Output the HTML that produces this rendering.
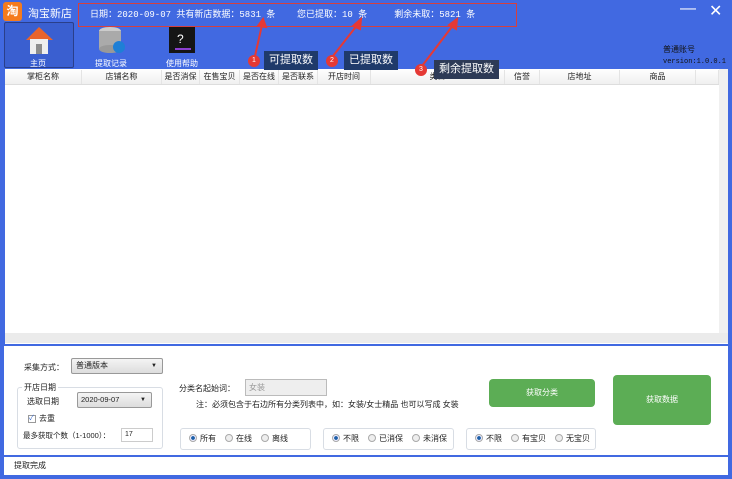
<!DOCTYPE html>
<html><head><meta charset="utf-8"><style>
*{margin:0;padding:0;box-sizing:border-box}
body{width:732px;height:479px;background:#4169e1;position:relative;overflow:hidden;font-family:"Liberation Sans","Noto Sans CJK SC",sans-serif;font-size:9px;color:#222}
.a{position:absolute}
.w{color:#fff}
.hd{position:absolute;top:70px;height:14px;font-size:8px;text-align:center;line-height:14px;border-right:1px solid #e4e4e4;white-space:nowrap;overflow:hidden}
.tip{position:absolute;background:#1f3a6a;color:#fff;font-size:11px;padding:0 5px;height:19px;line-height:19px}
.num{position:absolute;width:12px;height:12px;border-radius:6px;background:#e53935;color:#fff;font-size:7px;text-align:center;line-height:12px}
.rb{display:inline-block;width:8px;height:8px;border-radius:4px;border:1px solid #aaa;background:#eee;vertical-align:-1px;margin-right:3px}
.rb.on{background:radial-gradient(#1d5fa8 40%,#eef 50%)}
.grp{position:absolute;border:1px solid #d8dde4;border-radius:3px;height:22px;top:428px;line-height:20px;font-size:8px;padding-left:8px;white-space:nowrap;overflow:hidden}
.grp span{margin-right:9px}
.btn{position:absolute;background:#5cad55;border-radius:4px;color:#fff;text-align:center;font-size:8px}
</style></head><body>
<div class="a" style="left:3px;top:2px;width:19px;height:19px;background:#f57b1d;border-radius:3px;color:#fff;font-size:12px;line-height:19px;text-align:center;font-weight:bold">淘</div>
<div class="a w" style="left:28px;top:5px;font-size:11px">淘宝新店</div>
<div class="a" style="left:78px;top:3px;width:439px;height:24px;border:1px solid #d5403f"></div>
<div class="a w" style="left:90px;top:7px;font-size:9px;font-family:'Liberation Mono','Noto Sans CJK SC',monospace;white-space:pre">日期：2020-09-07 共有新店数据：5831 条    您已提取：10 条     剩余未取：5821 条</div>
<div class="a w" style="left:680px;top:0px;font-size:16px">—</div>
<div class="a w" style="left:709px;top:1px;font-size:16px">✕</div>
<div class="a" style="left:4px;top:22px;width:70px;height:46px;border:1px solid #2a3f8a;background:#3a5fd0;border-radius:2px"></div>
<svg class="a" style="left:22px;top:24px" width="34" height="32"><path d="M4 16 L17 3 L31 16 Z" fill="#e8642c"/><rect x="8" y="15" width="18" height="15" fill="#eee"/><rect x="14" y="20" width="6" height="10" fill="#8c8c8c"/></svg>
<div class="a w" style="left:30px;top:58px;font-size:8px">主页</div>
<svg class="a" style="left:97px;top:25px" width="30" height="32"><ellipse cx="13" cy="6" rx="11" ry="4" fill="#ccc"/><rect x="2" y="6" width="22" height="18" fill="#aaa"/><ellipse cx="13" cy="24" rx="11" ry="4" fill="#999"/><circle cx="22" cy="22" r="6" fill="#1e7fd6"/></svg>
<div class="a w" style="left:95px;top:58px;font-size:8px">提取记录</div>
<svg class="a" style="left:167px;top:25px" width="32" height="30"><rect x="2" y="2" width="26" height="26" fill="#151515"/><text x="10" y="18" fill="#fff" font-size="12" font-family="Liberation Sans">?</text><rect x="8" y="23" width="16" height="2" fill="#8c3fd0"/></svg>
<div class="a w" style="left:166px;top:58px;font-size:8px">使用帮助</div>
<div class="a" style="left:663px;top:44px;font-size:8px;color:#111">普通账号</div>
<div class="a" style="left:663px;top:58px;font-size:7px;color:#111;font-family:'Liberation Mono',monospace">version:1.0.0.1</div>
<div class="a" style="left:5px;top:69px;width:723px;height:275px;background:#fff"></div>
<div class="a" style="left:5px;top:69px;width:714px;height:16px;background:linear-gradient(#fff,#f0f0f0);border-bottom:1px solid #ddd"></div>
<div class="hd" style="left:5px;width:77px">掌柜名称</div>
<div class="hd" style="left:82px;width:80px">店铺名称</div>
<div class="hd" style="left:162px;width:38px">是否消保</div>
<div class="hd" style="left:200px;width:40px">在售宝贝</div>
<div class="hd" style="left:240px;width:39px">是否在线</div>
<div class="hd" style="left:279px;width:39px">是否联系</div>
<div class="hd" style="left:318px;width:53px">开店时间</div>
<div class="hd" style="left:371px;width:134px">类目</div>
<div class="hd" style="left:505px;width:35px">信誉</div>
<div class="hd" style="left:540px;width:80px">店地址</div>
<div class="hd" style="left:620px;width:76px">商品</div>
<div class="hd" style="left:696px;width:23px"></div>
<div class="a" style="left:719px;top:69px;width:9px;height:264px;background:#f0f0f0"></div>
<div class="a" style="left:5px;top:333px;width:723px;height:10px;background:#ebebeb"></div>
<svg class="a" style="left:0;top:0" width="732" height="90"><g stroke="#e53935" stroke-width="2" fill="#e53935"><line x1="255" y1="56" x2="262" y2="25"/><path d="M258 26 L263 19 L266 27Z"/><line x1="333" y1="56" x2="358" y2="24"/><path d="M353 26 L361 19 L360 29Z"/><line x1="422" y1="66" x2="454" y2="24"/><path d="M449 25 L457 19 L456 29Z"/></g></svg>
<div class="num" style="left:248px;top:55px">1</div>
<div class="tip" style="left:264px;top:51px">可提取数</div>
<div class="num" style="left:326px;top:55px">2</div>
<div class="tip" style="left:344px;top:51px">已提取数</div>
<div class="num" style="left:415px;top:64px">3</div>
<div class="tip" style="left:434px;top:60px;background:#2d3a56">剩余提取数</div>
<div class="a" style="left:4px;top:346px;width:724px;height:109px;background:#fff"></div>
<div class="a" style="left:24px;top:362px;font-size:8px">采集方式：</div>
<div class="a" style="left:71px;top:358px;width:92px;height:16px;border:1px solid #999;border-radius:2px;background:linear-gradient(#f4f4f4,#ddd);font-size:8px;line-height:14px;padding-left:4px">普通版本<span style="position:absolute;right:5px;font-size:6px">▼</span></div>
<div class="a" style="left:17px;top:387px;width:146px;height:62px;border:1px solid #d8dde4;border-radius:3px"></div>
<div class="a" style="left:22px;top:382px;font-size:8px;background:#fff;padding:0 2px">开店日期</div>
<div class="a" style="left:27px;top:396px;font-size:8px">选取日期</div>
<div class="a" style="left:77px;top:392px;width:75px;height:16px;border:1px solid #999;border-radius:2px;background:linear-gradient(#f4f4f4,#ddd);font-size:7.5px;line-height:14px;padding-left:3px">2020-09-07<span style="position:absolute;right:5px;font-size:6px">▼</span></div>
<div class="a" style="left:28px;top:415px;width:8px;height:8px;border:1px solid #999;font-size:7px;line-height:6px;color:#36c">✓</div>
<div class="a" style="left:39px;top:413px;font-size:8px">去重</div>
<div class="a" style="left:23px;top:430px;font-size:7.5px">最多获取个数（1-1000）：</div>
<div class="a" style="left:121px;top:428px;width:32px;height:14px;border:1px solid #ccc;font-size:7px;line-height:12px;padding-left:3px">17</div>
<div class="a" style="left:179px;top:383px;font-size:8px">分类名起始词：</div>
<div class="a" style="left:245px;top:379px;width:82px;height:17px;border:1px solid #bbb;background:#eee;font-size:8px;color:#999;line-height:15px;padding-left:3px">女装</div>
<div class="a" style="left:196px;top:399px;font-size:8px">注：必须包含于右边所有分类列表中，如：女装/女士精品 也可以写成 女装</div>
<div class="grp" style="left:180px;width:131px"><span><i class="rb on"></i>所有</span><span><i class="rb"></i>在线</span><span><i class="rb"></i>离线</span></div>
<div class="grp" style="left:323px;width:131px"><span><i class="rb on"></i>不限</span><span><i class="rb"></i>已消保</span><span><i class="rb"></i>未消保</span></div>
<div class="grp" style="left:466px;width:130px"><span><i class="rb on"></i>不限</span><span><i class="rb"></i>有宝贝</span><span><i class="rb"></i>无宝贝</span></div>
<div class="btn" style="left:489px;top:379px;width:106px;height:28px;line-height:28px">获取分类</div>
<div class="btn" style="left:613px;top:375px;width:98px;height:50px;line-height:50px">获取数据</div>
<div class="a" style="left:4px;top:457px;width:724px;height:18px;background:#fff;font-size:8px;line-height:18px;padding-left:10px">提取完成</div>
</body></html>
